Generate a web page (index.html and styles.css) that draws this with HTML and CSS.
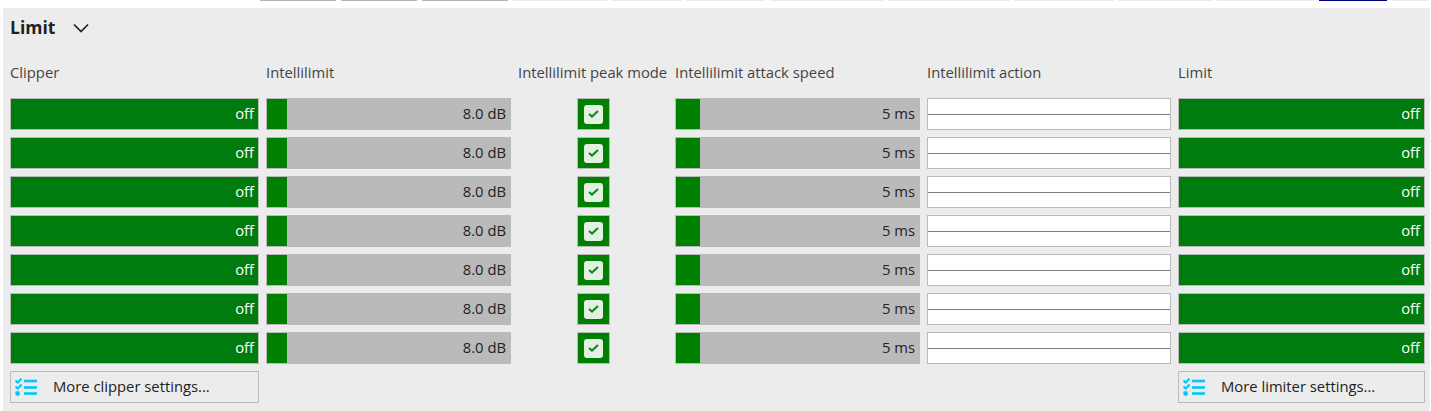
FILE: index.html
```html
<!DOCTYPE html>
<html lang="en">
<head>
    <meta charset="UTF-8">
    <title>Limit</title>
    <link rel="stylesheet" href="styles.css">
</head>
<body>
    <div class="tabs">
        <span class="tab dark w76"></span>
        <span class="tab dark w76"></span>
        <span class="tab dark w86"></span>
        <span class="tab w94"></span>
        <span class="tab w69"></span>
        <span class="tab w79"></span>
        <span class="tab w113"></span>
        <span class="tab w121"></span>
        <span class="tab w99"></span>
        <span class="tab w94"></span>
        <span class="tab w97"></span>
        <span class="tab blue w68"></span>
        <span class="tab w36"></span>
    </div>
    <div class="panel">
        <div class="panel-title">
            <h2>Limit</h2>
            <svg class="chevron" width="16" height="10" viewBox="0 0 16 10"><path d="M1 1.5 L8 8.5 L15 1.5" fill="none" stroke="#222" stroke-width="1.7"/></svg>
        </div>
        <div class="grid">
            <div class="head">Clipper</div>
            <div class="head">Intellilimit</div>
            <div class="head">Intellilimit peak mode</div>
            <div class="head">Intellilimit attack speed</div>
            <div class="head">Intellilimit action</div>
            <div class="head">Limit</div>

            <div class="toggle">off</div>
            <div class="slider slider-db">8.0 dB</div>
            <div class="check-cell"><div class="check"><div class="check-box"><svg width="11" height="8" viewBox="0 0 11 8"><path d="M1 4 L4 6.6 L10 1" fill="none" stroke="#0a8a1a" stroke-width="2"/></svg></div></div></div>
            <div class="slider slider-ms">5 ms</div>
            <div class="action"></div>
            <div class="toggle">off</div>

            <div class="toggle">off</div>
            <div class="slider slider-db">8.0 dB</div>
            <div class="check-cell"><div class="check"><div class="check-box"><svg width="11" height="8" viewBox="0 0 11 8"><path d="M1 4 L4 6.6 L10 1" fill="none" stroke="#0a8a1a" stroke-width="2"/></svg></div></div></div>
            <div class="slider slider-ms">5 ms</div>
            <div class="action"></div>
            <div class="toggle">off</div>

            <div class="toggle">off</div>
            <div class="slider slider-db">8.0 dB</div>
            <div class="check-cell"><div class="check"><div class="check-box"><svg width="11" height="8" viewBox="0 0 11 8"><path d="M1 4 L4 6.6 L10 1" fill="none" stroke="#0a8a1a" stroke-width="2"/></svg></div></div></div>
            <div class="slider slider-ms">5 ms</div>
            <div class="action"></div>
            <div class="toggle">off</div>

            <div class="toggle">off</div>
            <div class="slider slider-db">8.0 dB</div>
            <div class="check-cell"><div class="check"><div class="check-box"><svg width="11" height="8" viewBox="0 0 11 8"><path d="M1 4 L4 6.6 L10 1" fill="none" stroke="#0a8a1a" stroke-width="2"/></svg></div></div></div>
            <div class="slider slider-ms">5 ms</div>
            <div class="action"></div>
            <div class="toggle">off</div>

            <div class="toggle">off</div>
            <div class="slider slider-db">8.0 dB</div>
            <div class="check-cell"><div class="check"><div class="check-box"><svg width="11" height="8" viewBox="0 0 11 8"><path d="M1 4 L4 6.6 L10 1" fill="none" stroke="#0a8a1a" stroke-width="2"/></svg></div></div></div>
            <div class="slider slider-ms">5 ms</div>
            <div class="action"></div>
            <div class="toggle">off</div>

            <div class="toggle">off</div>
            <div class="slider slider-db">8.0 dB</div>
            <div class="check-cell"><div class="check"><div class="check-box"><svg width="11" height="8" viewBox="0 0 11 8"><path d="M1 4 L4 6.6 L10 1" fill="none" stroke="#0a8a1a" stroke-width="2"/></svg></div></div></div>
            <div class="slider slider-ms">5 ms</div>
            <div class="action"></div>
            <div class="toggle">off</div>

            <div class="toggle">off</div>
            <div class="slider slider-db">8.0 dB</div>
            <div class="check-cell"><div class="check"><div class="check-box"><svg width="11" height="8" viewBox="0 0 11 8"><path d="M1 4 L4 6.6 L10 1" fill="none" stroke="#0a8a1a" stroke-width="2"/></svg></div></div></div>
            <div class="slider slider-ms">5 ms</div>
            <div class="action"></div>
            <div class="toggle">off</div>

            <button class="more col-first">
                <svg width="22" height="18" viewBox="0 0 22 18"><g fill="none" stroke="#00c8ff"><path d="M0.5 2.5 L2.8 4.6 L6.5 0.5" stroke-width="2"/><path d="M0.5 8.5 L2.8 10.6 L6.5 6.5" stroke-width="2"/><path d="M9 3 H22" stroke-width="2.6"/><path d="M9 9.5 H22" stroke-width="2.6"/><path d="M9 15.5 H22" stroke-width="2.6"/></g><circle cx="2.6" cy="15.5" r="2.4" fill="#00c8ff"/></svg>
                <span>More clipper settings...</span>
            </button>
            <button class="more col-last">
                <svg width="22" height="18" viewBox="0 0 22 18"><g fill="none" stroke="#00c8ff"><path d="M0.5 2.5 L2.8 4.6 L6.5 0.5" stroke-width="2"/><path d="M0.5 8.5 L2.8 10.6 L6.5 6.5" stroke-width="2"/><path d="M9 3 H22" stroke-width="2.6"/><path d="M9 9.5 H22" stroke-width="2.6"/><path d="M9 15.5 H22" stroke-width="2.6"/></g><circle cx="2.6" cy="15.5" r="2.4" fill="#00c8ff"/></svg>
                <span>More limiter settings...</span>
            </button>
        </div>
    </div>
</body>
</html>
```

FILE: styles.css
```css
* {
    box-sizing: border-box;
}
body {
    margin: 0;
    background: #fff;
    font-family: "Open Sans", "Noto Sans", sans-serif;
    font-size: 14.8px;
    color: #222;
    height: 411px;
    overflow: hidden;
}
.tabs {
    display: flex;
    gap: 5px;
    height: 8px;
    padding-left: 260px;
}
.tab {
    height: 1px;
    background: #ebebeb;
}
.tab.dark { background: #b4b4b4; }
.tab.blue { background: #00007f; }
.w76 { width: 76px; }
.w86 { width: 86px; }
.w94 { width: 94px; }
.w69 { width: 69px; }
.w79 { width: 79px; }
.w113 { width: 113px; }
.w121 { width: 121px; }
.w99 { width: 99px; }
.w97 { width: 97px; }
.w68 { width: 68px; }
.w36 { width: 36px; }
.panel {
    margin: 0 1px 0 3px;
    height: 403px;
    background: #ececec;
    padding: 0 5px 0 7px;
}
.panel-title {
    display: flex;
    align-items: center;
    gap: 18px;
    height: 40px;
}
.panel-title h2 {
    margin: -2px 0 0;
    font-size: 17.5px;
    font-weight: 700;
    color: #222;
}
.grid {
    display: grid;
    grid-template-columns: 249px 245px 150px 245px 244px 247px;
    grid-template-rows: 43px repeat(8, 32px);
    column-gap: 7px;
    row-gap: 7px;
}
.head {
    color: #444;
    padding-top: 14px;
    white-space: nowrap;
}
.toggle {
    background: #007c0e;
    border: 1px solid #bababa;
    color: #fff;
    text-align: right;
    padding-right: 4px;
    line-height: 28px;
}
.slider {
    border: 1px solid #bababa;
    text-align: right;
    padding-right: 4px;
    line-height: 28px;
    color: #222;
}
.slider-db {
    background: linear-gradient(to right, #008000 20px, #bababa 20px);
}
.slider-ms {
    background: linear-gradient(to right, #008000 24px, #bababa 24px);
}
.check-cell {
    display: flex;
    justify-content: center;
}
.check {
    width: 33px;
    height: 32px;
    background: #008000;
    border: 1px solid #bababa;
    display: flex;
    align-items: center;
    justify-content: center;
}
.check-box {
    width: 19px;
    height: 19px;
    border-radius: 3px;
    background: #e2f1e2;
    display: flex;
    align-items: center;
    justify-content: center;
}
.check-box svg {
    display: block;
}
.action {
    background: linear-gradient(#fff 15px, #808080 15px, #808080 16px, #fff 16px);
    border: 1px solid #bababa;
}
.more {
    display: flex;
    align-items: center;
    background: transparent;
    border: 1px solid #bababa;
    font: inherit;
    color: #222;
    padding: 0 0 2px 4px;
    text-align: left;
}
.more svg {
    flex: none;
    margin-top: 2px;
}
.more span {
    margin-left: 16px;
}
.col-first { grid-column: 1; }
.col-last { grid-column: 6; }
```
